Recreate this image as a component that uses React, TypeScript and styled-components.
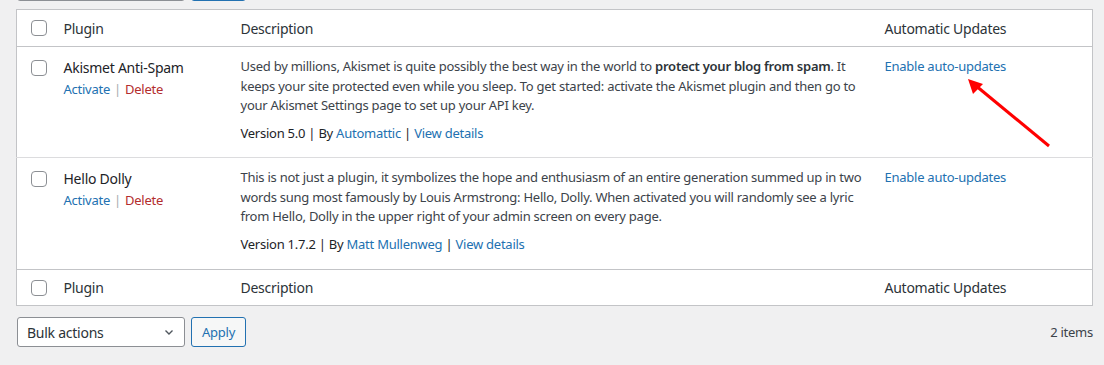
import React from 'react';
import styled, { createGlobalStyle } from 'styled-components';

interface Plugin {
  name: string;
  lines: React.ReactNode[];
  version: string;
  author: string;
}

const plugins: Plugin[] = [
  {
    name: 'Akismet Anti-Spam',
    lines: [
      <>
        Used by millions, Akismet is quite possibly the best way in the world to{' '}
        <strong>protect your blog from spam</strong>. It
      </>,
      'keeps your site protected even while you sleep. To get started: activate the Akismet plugin and then go to',
      'your Akismet Settings page to set up your API key.',
    ],
    version: '5.0',
    author: 'Automattic',
  },
  {
    name: 'Hello Dolly',
    lines: [
      'This is not just a plugin, it symbolizes the hope and enthusiasm of an entire generation summed up in two',
      'words sung most famously by Louis Armstrong: Hello, Dolly. When activated you will randomly see a lyric',
      'from Hello, Dolly in the upper right of your admin screen on every page.',
    ],
    version: '1.7.2',
    author: 'Matt Mullenweg',
  },
];

const App: React.FC = () => {
  return (
    <Page>
      <GlobalStyle />
      {/* top tablenav, scrolled mostly out of view */}
      <TopNav>
        <BulkSelect />
        <ApplyButton />
      </TopNav>

      <Table>
        <colgroup>
          <col style={{ width: 37 }} />
          <col style={{ width: 177 }} />
          <col style={{ width: 644 }} />
          <col />
        </colgroup>
        <thead>
          <HeadRow>
            <CheckCell><Checkbox /></CheckCell>
            <HeadCell>Plugin</HeadCell>
            <HeadCell>Description</HeadCell>
            <HeadCell>Automatic Updates</HeadCell>
          </HeadRow>
        </thead>
        <tbody>
          {plugins.map((p, i) => (
            <PluginRow key={p.name} $last={i === plugins.length - 1}>
              <CheckCell $body><Checkbox /></CheckCell>
              <BodyCell>
                <PluginName>{p.name}</PluginName>
                <RowActions>
                  <Link>Activate</Link>
                  <Sep>|</Sep>
                  <DeleteLink>Delete</DeleteLink>
                </RowActions>
              </BodyCell>
              <BodyCell>
                <Description>
                  {p.lines.map((line, j) => (
                    <React.Fragment key={j}>
                      {line}
                      {j < p.lines.length - 1 && <br />}
                    </React.Fragment>
                  ))}
                </Description>
                <VersionLine>
                  Version {p.version} | By <Link>{p.author}</Link> | <Link>View details</Link>
                </VersionLine>
              </BodyCell>
              <BodyCell>
                <Link>Enable auto-updates</Link>
              </BodyCell>
            </PluginRow>
          ))}
        </tbody>
        <tfoot>
          <FootRow>
            <CheckCell><Checkbox /></CheckCell>
            <HeadCell>Plugin</HeadCell>
            <HeadCell>Description</HeadCell>
            <HeadCell>Automatic Updates</HeadCell>
          </FootRow>
        </tfoot>
      </Table>

      <BottomNav>
        <BulkSelect>
          <span>Bulk actions</span>
          <Chevron />
        </BulkSelect>
        <ApplyButton>Apply</ApplyButton>
        <ItemCount>2 items</ItemCount>
      </BottomNav>

      <Arrow width="1104" height="365" viewBox="0 0 1104 365">
        <line x1="1049" y1="146" x2="975" y2="85" stroke="#ff0000" strokeWidth="3" />
        <polygon points="968,79 983,84 973,94" fill="#ff0000" />
      </Arrow>
    </Page>
  );
};

const Chevron: React.FC = () => (
  <svg width="14" height="14" viewBox="0 0 20 20">
    <path d="M5 8l5 5 5-5" fill="none" stroke="#50575e" strokeWidth="2" />
  </svg>
);

const GlobalStyle = createGlobalStyle`
  html, body {
    margin: 0;
    padding: 0;
    background: #f0f0f1;
    overflow: hidden;
  }
  body {
    font-family: "Noto Sans", "Open Sans", sans-serif;
    font-size: 13px;
    letter-spacing: -0.25px;
    color: #3c434a;
  }
`;

const Page = styled.div`
  display: flow-root;
  position: relative;
  width: 1104px;
  min-height: 365px;
  padding: 0 11px 0 16px;
  box-sizing: border-box;
`;

const TopNav = styled.div`
  display: flex;
  gap: 6px;
  margin: -29px 0 8px 1px;
  height: 30px;
`;

const BottomNav = styled.div`
  display: flex;
  align-items: center;
  gap: 6px;
  margin: 11px 0 0 1px;
  height: 30px;
`;

const BulkSelect = styled.div`
  width: 168px;
  height: 30px;
  box-sizing: border-box;
  border: 1px solid #8c8f94;
  border-radius: 3px;
  background: #fff;
  display: flex;
  align-items: center;
  justify-content: space-between;
  padding: 0 8px 0 9px;
  font-size: 14px;
  color: #2c3338;
`;

const ApplyButton = styled.div`
  width: 55px;
  height: 30px;
  box-sizing: border-box;
  border: 1px solid #2271b1;
  border-radius: 3px;
  background: #f6f7f7;
  color: #2271b1;
  font-size: 13px;
  display: flex;
  align-items: center;
  justify-content: center;
`;

const ItemCount = styled.div`
  margin-left: auto;
  color: #3c434a;
  font-size: 13px;
`;

const Table = styled.table`
  width: 1077px;
  border-collapse: collapse;
  table-layout: fixed;
  background: #fff;
  border: 1px solid #c3c4c7;
`;

const HeadRow = styled.tr`
  height: 37px;
  border-bottom: 1px solid #c3c4c7;
`;

const FootRow = styled.tr`
  height: 36px;
  border-top: 1px solid #c3c4c7;
`;

const HeadCell = styled.th`
  text-align: left;
  font-weight: 400;
  font-size: 14px;
  color: #2c3338;
  padding: 0 10px;
  vertical-align: middle;
`;

const CheckCell = styled.td<{ $body?: boolean }>`
  padding: ${(p) => (p.$body ? '13px 0 0 14px' : '0 0 0 14px')};
  vertical-align: ${(p) => (p.$body ? 'top' : 'middle')};
`;

const Checkbox = styled.span`
  display: block;
  width: 16px;
  height: 16px;
  box-sizing: border-box;
  border: 1px solid #8c8f94;
  border-radius: 4px;
  background: #fff;
`;

const PluginRow = styled.tr<{ $last?: boolean }>`
  height: ${(p) => (p.$last ? '112px' : '111px')};
  border-bottom: ${(p) => (p.$last ? 'none' : '1px solid #dcdcde')};
`;

const BodyCell = styled.td`
  padding: 10px 10px 0;
  vertical-align: top;
  line-height: 19.5px;
`;

const PluginName = styled.div`
  font-size: 14px;
  color: #1d2327;
  line-height: 21px;
`;

const RowActions = styled.div`
  margin-top: 2px;
  font-size: 13px;
  display: flex;
  gap: 4px;
`;

const Link = styled.span`
  color: #2271b1;
`;

const DeleteLink = styled.span`
  color: #b32d2e;
`;

const Sep = styled.span`
  color: #a7aaad;
`;

const Description = styled.div`
  white-space: nowrap;
  strong {
    font-weight: 600;
    color: #2c3338;
  }
`;

const VersionLine = styled.div`
  margin-top: 8.5px;
  color: #1d2327;
`;

const Arrow = styled.svg`
  position: absolute;
  left: 0;
  top: 0;
  pointer-events: none;
`;

export default App;
